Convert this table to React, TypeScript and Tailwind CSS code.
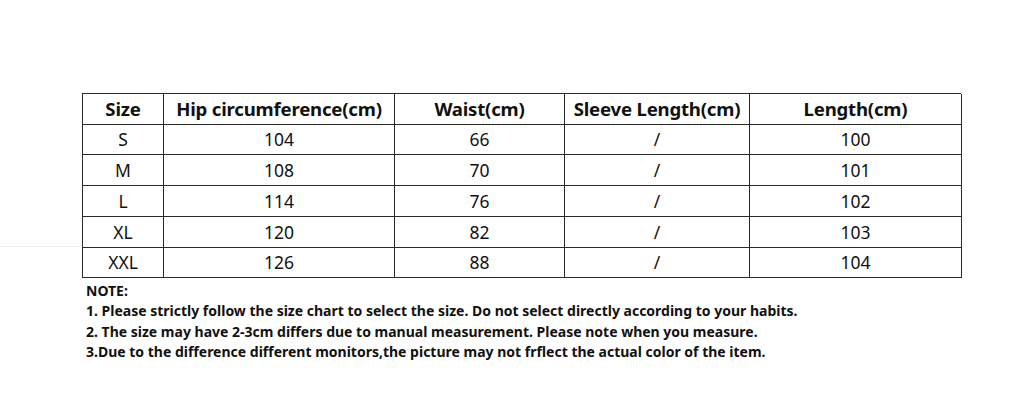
import React from "react";

const cols = ["Size", "Hip circumference(cm)", "Waist(cm)", "Sleeve Length(cm)", "Length(cm)"];
const rows = [
  ["S", "104", "66", "/", "100"],
  ["M", "108", "70", "/", "101"],
  ["L", "114", "76", "/", "102"],
  ["XL", "120", "82", "/", "103"],
  ["XXL", "126", "88", "/", "104"],
];
const heights = ["h-[30px]", "h-[31px]", "h-[31px]", "h-[31px]", "h-[30px]"];

export default function App() {
  return (
    <div
      className="relative w-[1024px] h-[419px] bg-white text-[#111]"
      style={{ fontFamily: '"Noto Sans", "Open Sans", sans-serif' }}
    >
      <div className="absolute left-0 top-[246px] w-[82px] h-px bg-[#ececec]" />
      <div className="pl-[82px] pt-[93px]">
        <div className="grid grid-cols-[81px_231px_170px_185px_212px] w-[879px] border-l border-t border-[#2a2a2a]">
          {cols.map((c) => (
            <div
              key={c}
              className="h-[31px] flex items-center justify-center border-r border-b border-[#2a2a2a] text-[18.6px] font-bold tracking-[-0.2px]"
            >
              {c}
            </div>
          ))}
          {rows.map((r, i) =>
            r.map((v, j) => (
              <div
                key={i + "-" + j}
                className={`${heights[i]} flex items-center justify-center border-r border-b border-[#2a2a2a] text-[17.5px]`}
              >
                {v}
              </div>
            ))
          )}
        </div>
        <div className="pl-[4px] pt-[3px] text-[14px] font-bold leading-[20.3px] text-[#111]">
          <div>NOTE:</div>
          <div>1. Please strictly follow the size chart to select the size. Do not select directly according to your habits.</div>
          <div>2. The size may have 2-3cm differs due to manual measurement. Please note when you measure.</div>
          <div>3.Due to the difference different monitors,the picture may not frflect the actual color of the item.</div>
        </div>
      </div>
    </div>
  );
}
